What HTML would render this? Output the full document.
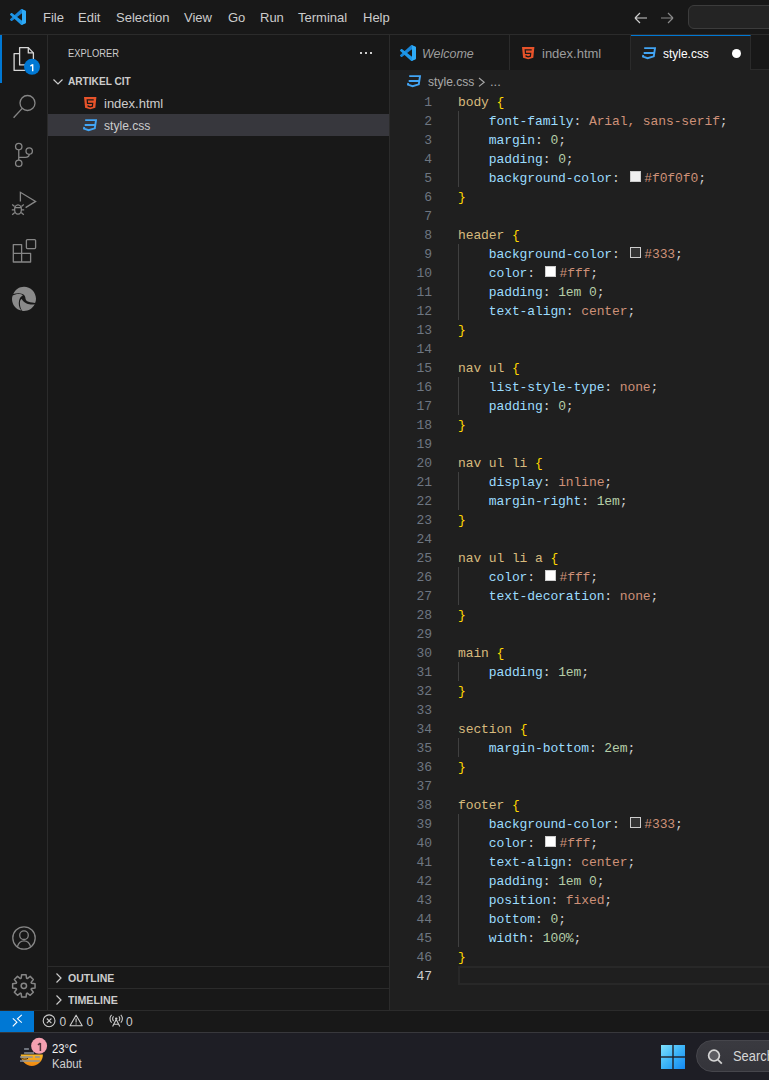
<!DOCTYPE html>
<html><head><meta charset="utf-8">
<style>
*{margin:0;padding:0;box-sizing:border-box}
html,body{width:769px;height:1080px;overflow:hidden;background:#181818;font-family:"Liberation Sans",sans-serif;color:#cccccc}
.abs{position:absolute}
#title{position:absolute;left:0;top:0;width:769px;height:35px;background:#181818;border-bottom:1px solid #2b2b2b}
.menu{position:absolute;top:10px;font-size:13px;color:#cccccc;line-height:15px}
#act{position:absolute;left:0;top:35px;width:48px;height:975px;background:#181818;border-right:1px solid #2b2b2b}
#side{position:absolute;left:48px;top:35px;width:342px;height:975px;background:#181818;border-right:1px solid #2b2b2b}
#tabs{position:absolute;left:390px;top:35px;width:379px;height:35px;background:#181818;border-bottom:1px solid #2b2b2b}
.tab{position:absolute;top:0;height:35px;border-right:1px solid #2b2b2b;background:#181818}
.tab .lbl{position:absolute;top:10px;font-size:13px;line-height:15px;color:#9d9d9d;white-space:nowrap}
#editor{position:absolute;left:390px;top:70px;width:379px;height:940px;background:#1f1f1f}
#status{position:absolute;left:0;top:1010px;width:769px;height:22px;background:#181818;border-top:1px solid #2b2b2b}
#task{position:absolute;left:0;top:1032px;width:769px;height:48px;background:#1e1e25;border-top:1px solid #38383c}
.code{position:absolute;left:68px;font-family:"Liberation Mono",monospace;font-size:13px;letter-spacing:-0.1px;white-space:pre;line-height:19px;height:19px;color:#cccccc}
.ln{position:absolute;left:0;width:42px;text-align:right;color:#6e7681;font-family:"Liberation Mono",monospace;font-size:13px;line-height:19px;letter-spacing:-0.1px}
.ln.act{color:#cccccc}
.ig{position:absolute;left:68px;width:1px;background:#404040}
.s{color:#d7ba7d}.b{color:#ffd700}.p{color:#9cdcfe}.v{color:#ce9178}.n{color:#b5cea8}.w{color:#cccccc}
.sw{display:inline-block;width:11px;height:11px;border:1px solid #cccccc;margin:0 3.4px 0 2.4px;vertical-align:0px}
.sh{position:absolute;left:0;width:341px;height:22px;border-top:1px solid #2b2b2b;font-size:11px;font-weight:bold;line-height:20px;color:#cccccc}
.row{position:absolute;left:0;width:341px;height:22px;font-size:13px;line-height:22px;color:#cccccc}
</style></head><body>
<div id="title">
  <svg class="abs" style="left:10px;top:9px" width="16" height="16" viewBox="0 0 100 100">
    <path fill="#1784d6" d="M96.46 10.8 75.86.87a6.230 6.230 0 0 0-7.1 1.2L1.33 63.260a4.170 4.170 0 0 0 0 6.160l5.51 5a4.170 4.170 0 0 0 5.320.24L93.48 13.1a4.140 4.140 0 0 1 6.520 3.310v-.2a6.270 6.270 0 0 0-3.540-5.410z"/>
    <path fill="#1e97e8" d="M96.46 89.2 75.86 99.13a6.230 6.230 0 0 1-7.1-1.2L1.33 36.740a4.170 4.170 0 0 1 0-6.160l5.51-5a4.170 4.170 0 0 1 5.320-.24l81.320 61.570a4.140 4.140 0 0 0 6.520-3.310v.2a6.270 6.270 0 0 1-3.540 5.4z"/>
    <path fill="#2eaaf6" d="M75.86 99.13a6.230 6.230 0 0 1-7.1-1.2c2.3 2.3 6.240.67 6.240-2.580V4.650c0-3.250-3.940-4.880-6.240-2.580a6.230 6.230 0 0 1 7.1-1.2l20.6 9.9A6.250 6.250 0 0 1 100 16.4v67.2a6.250 6.250 0 0 1-3.540 5.630z"/>
  </svg>
  <div class="menu" style="left:43px">File</div>
  <div class="menu" style="left:78px">Edit</div>
  <div class="menu" style="left:116px">Selection</div>
  <div class="menu" style="left:184px">View</div>
  <div class="menu" style="left:228px">Go</div>
  <div class="menu" style="left:260px">Run</div>
  <div class="menu" style="left:298px">Terminal</div>
  <div class="menu" style="left:363px">Help</div>
  <svg class="abs" style="left:633px;top:10px" width="16" height="16" viewBox="0 0 16 16"><path d="M2 8h12M2 8l5-5M2 8l5 5" stroke="#cccccc" stroke-width="1.2" fill="none"/></svg>
  <svg class="abs" style="left:659px;top:10px" width="16" height="16" viewBox="0 0 16 16"><path d="M2 8h12M14 8l-5-5M14 8l-5 5" stroke="#8a8a8a" stroke-width="1.2" fill="none"/></svg>
  <div class="abs" style="left:688px;top:5px;width:100px;height:24px;border:1px solid #3c3c3c;border-radius:6px;background:#242424"></div>
</div>

<div id="act">
<svg class="abs" style="left:0;top:-35px" width="48" height="1080" viewBox="0 0 48 1080">
  <rect x="0" y="35" width="2" height="48" fill="#0078d4"/>
  <g fill="none" stroke="#d7d7d7" stroke-width="1.3" stroke-linejoin="round">
    <path d="M19.5 53.6H14.1V70.4H25.5"/>
    <path d="M19.6 47.6H28.3L33.4 52.9V64.9H19.6Z"/>
    <path d="M28.3 47.6V52.9H33.4"/>
  </g>
  <circle cx="32" cy="66.8" r="8" fill="#0078d4"/>
  <path d="M32.7 64.2V71.2M32.7 64.5L30.4 66.1" stroke="#ffffff" stroke-width="1.4" fill="none"/>
  <g fill="none" stroke="#868686" stroke-width="1.3">
    <circle cx="27.5" cy="103" r="7.5"/>
    <path d="M22.2 108.4L13.6 117.8"/>
    <circle cx="18.75" cy="146.6" r="3.2"/>
    <circle cx="18.75" cy="163.3" r="3.2"/>
    <circle cx="29.2" cy="151.1" r="3.2"/>
    <path d="M18.75 149.8V160.1M18.75 157.4H25.4Q29.2 157.4 29.2 154.3"/>
    <path d="M20.4 201.6V192.3L35.6 201.4L25.6 207.6" stroke-linejoin="miter"/>
    <ellipse cx="18" cy="209.5" rx="3.4" ry="4.6"/>
    <path d="M14.6 207.6H21.4M12.2 204.6L14.6 206.4M23.8 204.6L21.4 206.4M11.8 209.8H14.6M24.2 209.8H21.4M12.2 214.8L14.8 212.6M23.8 214.8L21.2 212.6"/>
    <path d="M13.3 244.6H21.6V262H13.3ZM13.3 253.3H30.6V262H21.6" stroke-linejoin="round"/><rect x="26.4" y="239.6" width="9.2" height="9" rx="1"/>
    <circle cx="24" cy="938" r="11.2"/>
    <circle cx="24" cy="935.2" r="4.3"/>
    <path d="M17.4 946.6C18.6 942.6 21 940.8 24 940.8S29.4 942.6 30.6 946.6"/>
    <path stroke-linejoin="round" d="M21.14 978.24 L21.64 974.64 L26.04 974.64 L26.54 978.24 L27.30 978.56 L30.20 976.36 L33.32 979.48 L31.12 982.38 L31.44 983.14 L35.04 983.64 L35.04 988.04 L31.44 988.54 L31.12 989.30 L33.32 992.20 L30.20 995.32 L27.30 993.12 L26.54 993.44 L26.04 997.04 L21.64 997.04 L21.14 993.44 L20.38 993.12 L17.48 995.32 L14.36 992.20 L16.56 989.30 L16.24 988.54 L12.64 988.04 L12.64 983.64 L16.24 983.14 L16.56 982.38 L14.36 979.48 L17.48 976.36 L20.38 978.56Z" stroke-width="1.5"/>
    <circle cx="23.84" cy="985.84" r="2.7" stroke-width="1.5"/>
  </g>
  <g fill="#8a8a8a" transform="translate(10 284)">
    <path d="M3.3 10.1 C5.2 5.4 9.2 2.7 14 2.7 C20.6 2.7 26 8.1 26 14.8 C26 16.4 25.7 17.8 25.1 19 C23.6 18.3 20.6 18.4 18.6 17.7 C16.6 17 15.6 15.8 15.5 14.4 C15.4 12.4 14.4 10.6 12.6 9.9 C9.6 8.8 5.8 9.2 3.3 10.1 Z"/>
    <path d="M2.7 11.6 C4.2 10.6 6.4 10 8.6 10 C10.4 10 12 10.4 13 11.3 C11 12.3 9.7 14.1 9.1 16.4 C8.4 19.4 8.7 23.6 11.4 26.6 C6 25.6 2 20.8 2 15 C2 13.8 2.2 12.7 2.7 11.6 Z"/>
    <path d="M9.9 18.5 C10 16.8 10.6 15.6 11.7 15 C12.6 16.8 14.2 18.4 16.6 19.4 C19 20.4 22.4 20.8 24.7 20.2 C22.6 24.3 18.6 26.9 14 26.9 C13.3 26.9 12.7 26.8 12.1 26.7 C10.5 24.6 9.8 21.4 9.9 18.5 Z"/>
  </g>
</svg>
</div>

<div id="side">
  <div class="abs" style="left:20px;top:12px;font-size:11px;line-height:13px;color:#cccccc;transform:scaleX(0.85);transform-origin:0 0">EXPLORER</div>
  <div class="abs" style="left:312px;top:17px;width:2px;height:2px;background:#cccccc"></div>
  <div class="abs" style="left:317px;top:17px;width:2px;height:2px;background:#cccccc"></div>
  <div class="abs" style="left:322px;top:17px;width:2px;height:2px;background:#cccccc"></div>
  <svg class="abs" style="left:4px;top:39px" width="16" height="16" viewBox="0 0 16 16"><path d="M1.5 5.5L6 10L10.5 5.5" stroke="#cccccc" stroke-width="1.2" fill="none"/></svg>
  <div class="abs" style="left:20px;top:40px;font-size:11px;font-weight:bold;line-height:13px;color:#cccccc;transform:scaleX(0.92);transform-origin:0 0">ARTIKEL CIT</div>
  <div class="row" style="top:57px">
    <svg class="abs" style="left:35.8px;top:4.7px" width="13" height="13" viewBox="0 0 13 13"><path d="M0 0H12.4L11.3 10.8L6.2 12.2L1.1 10.8Z" fill="#e8532a"/><path d="M9.7 2.9H3.2L3.5 6.4H8.7L8.4 9.2L6.2 9.8L4.1 9.2L4 8.2" stroke="#181818" stroke-width="1.2" fill="none"/></svg>
    <span class="abs" style="left:56px;top:1px">index.html</span>
  </div>
  <div class="row" style="top:79px;background:#37373d">
    <svg class="abs" style="left:35px;top:4.7px" width="15" height="13" viewBox="0 0 15 13"><path d="M2.2 1.1H13L11.8 9.3L5.6 11.2L1 9.6L1.3 8M1.7 6H11.6" stroke="#42a5f5" stroke-width="1.9" fill="none" stroke-linejoin="miter"/></svg>
    <span class="abs" style="left:56px;top:1px;transform:scaleX(0.93);transform-origin:0 0">style.css</span>
  </div>
  <div class="sh" style="top:931px">
    <svg class="abs" style="left:3px;top:3px" width="16" height="16" viewBox="0 0 16 16"><path d="M5.5 3.5L10 8L5.5 12.5" stroke="#cccccc" stroke-width="1.2" fill="none"/></svg>
    <span class="abs" style="left:20px;top:1px;transform:scaleX(0.96);transform-origin:0 0">OUTLINE</span>
  </div>
  <div class="sh" style="top:953px">
    <svg class="abs" style="left:3px;top:3px" width="16" height="16" viewBox="0 0 16 16"><path d="M5.5 3.5L10 8L5.5 12.5" stroke="#cccccc" stroke-width="1.2" fill="none"/></svg>
    <span class="abs" style="left:20px;top:1px;transform:scaleX(0.97);transform-origin:0 0">TIMELINE</span>
  </div>
</div>

<div id="tabs">
  <div class="tab" style="left:0;width:120px">
    <svg class="abs" style="left:10px;top:10px" width="16" height="16" viewBox="0 0 100 100">
      <path fill="#1784d6" d="M96.46 10.8 75.86.87a6.230 6.230 0 0 0-7.1 1.2L1.33 63.260a4.170 4.170 0 0 0 0 6.160l5.51 5a4.170 4.170 0 0 0 5.320.24L93.48 13.1a4.140 4.140 0 0 1 6.520 3.310v-.2a6.270 6.270 0 0 0-3.540-5.410z"/>
    <path fill="#1e97e8" d="M96.46 89.2 75.86 99.13a6.230 6.230 0 0 1-7.1-1.2L1.33 36.740a4.170 4.170 0 0 1 0-6.160l5.51-5a4.170 4.170 0 0 1 5.320-.24l81.320 61.570a4.140 4.140 0 0 0 6.520-3.310v.2a6.270 6.270 0 0 1-3.540 5.4z"/>
    <path fill="#2eaaf6" d="M75.86 99.13a6.230 6.230 0 0 1-7.1-1.2c2.3 2.3 6.240.67 6.240-2.580V4.650c0-3.250-3.940-4.880-6.240-2.580a6.230 6.230 0 0 1 7.1-1.2l20.6 9.9A6.250 6.250 0 0 1 100 16.4v67.2a6.250 6.250 0 0 1-3.540 5.630z"/>
    </svg>
    <span class="lbl" style="left:32px;top:11px;font-style:italic;transform:scaleX(0.96);transform-origin:0 0">Welcome</span>
  </div>
  <div class="tab" style="left:120px;width:121px">
    <svg class="abs" style="left:11.8px;top:11.7px" width="13" height="13" viewBox="0 0 13 13"><path d="M0 0H12.4L11.3 10.8L6.2 12.2L1.1 10.8Z" fill="#e8532a"/><path d="M9.7 2.9H3.2L3.5 6.4H8.7L8.4 9.2L6.2 9.8L4.1 9.2L4 8.2" stroke="#181818" stroke-width="1.2" fill="none"/></svg>
    <span class="lbl" style="left:32px;top:11px">index.html</span>
  </div>
  <div class="tab" style="left:241px;width:120px;background:#1f1f1f;height:35px;border-top:1px solid #0078d4">
    <svg class="abs" style="left:11px;top:10.7px" width="15" height="13" viewBox="0 0 15 13"><path d="M2.2 1.1H13L11.8 9.3L5.6 11.2L1 9.6L1.3 8M1.7 6H11.6" stroke="#42a5f5" stroke-width="1.9" fill="none" stroke-linejoin="miter"/></svg>
    <span class="lbl" style="left:32px;top:10px;color:#ffffff;transform:scaleX(0.92);transform-origin:0 0">style.css</span>
    <div class="abs" style="left:100.5px;top:12.5px;width:9px;height:9px;border-radius:50%;background:#ffffff"></div>
  </div>
</div>

<div id="editor">
  <svg class="abs" style="left:17px;top:4.5px" width="15" height="13" viewBox="0 0 15 13"><path d="M2.2 1.1H13L11.8 9.3L5.6 11.2L1 9.6L1.3 8M1.7 6H11.6" stroke="#42a5f5" stroke-width="1.9" fill="none" stroke-linejoin="miter"/></svg>
  <span class="abs" style="left:38px;top:4px;font-size:13px;line-height:15px;color:#a9a9a9;transform:scaleX(0.93);transform-origin:0 0">style.css</span>
  <svg class="abs" style="left:86px;top:6px" width="10" height="12" viewBox="0 0 10 12"><path d="M3 2L8.2 6.2L3 10.4" stroke="#a9a9a9" stroke-width="1.1" fill="none"/></svg>
  <span class="abs" style="left:100px;top:4px;font-size:13px;line-height:15px;color:#a9a9a9">...</span>
  <div class="abs" style="left:68px;top:896px;width:320px;height:19px;border:2px solid #282828"></div>
<div class="ig" style="top:41px;height:76px"></div>
<div class="ig" style="top:174px;height:76px"></div>
<div class="ig" style="top:307px;height:38px"></div>
<div class="ig" style="top:402px;height:38px"></div>
<div class="ig" style="top:497px;height:38px"></div>
<div class="ig" style="top:592px;height:19px"></div>
<div class="ig" style="top:668px;height:19px"></div>
<div class="ig" style="top:744px;height:133px"></div><div class="ln" style="top:23px">1</div><div class="code" style="top:23px"><span class="s">body</span> <span class="b">{</span></div>
<div class="ln" style="top:42px">2</div><div class="code" style="top:42px">    <span class="p">font-family</span><span class="w">: </span><span class="v">Arial, sans-serif</span><span class="w">;</span></div>
<div class="ln" style="top:61px">3</div><div class="code" style="top:61px">    <span class="p">margin</span><span class="w">: </span><span class="n">0</span><span class="w">;</span></div>
<div class="ln" style="top:80px">4</div><div class="code" style="top:80px">    <span class="p">padding</span><span class="w">: </span><span class="n">0</span><span class="w">;</span></div>
<div class="ln" style="top:99px">5</div><div class="code" style="top:99px">    <span class="p">background-color</span><span class="w">: </span><span class="sw" style="background:#f0f0f0"></span><span class="v">#f0f0f0</span><span class="w">;</span></div>
<div class="ln" style="top:118px">6</div><div class="code" style="top:118px"><span class="b">}</span></div>
<div class="ln" style="top:137px">7</div><div class="code" style="top:137px"></div>
<div class="ln" style="top:156px">8</div><div class="code" style="top:156px"><span class="s">header</span> <span class="b">{</span></div>
<div class="ln" style="top:175px">9</div><div class="code" style="top:175px">    <span class="p">background-color</span><span class="w">: </span><span class="sw" style="background:#333"></span><span class="v">#333</span><span class="w">;</span></div>
<div class="ln" style="top:194px">10</div><div class="code" style="top:194px">    <span class="p">color</span><span class="w">: </span><span class="sw" style="background:#fff"></span><span class="v">#fff</span><span class="w">;</span></div>
<div class="ln" style="top:213px">11</div><div class="code" style="top:213px">    <span class="p">padding</span><span class="w">: </span><span class="n">1em</span> <span class="n">0</span><span class="w">;</span></div>
<div class="ln" style="top:232px">12</div><div class="code" style="top:232px">    <span class="p">text-align</span><span class="w">: </span><span class="v">center</span><span class="w">;</span></div>
<div class="ln" style="top:251px">13</div><div class="code" style="top:251px"><span class="b">}</span></div>
<div class="ln" style="top:270px">14</div><div class="code" style="top:270px"></div>
<div class="ln" style="top:289px">15</div><div class="code" style="top:289px"><span class="s">nav</span> <span class="s">ul</span> <span class="b">{</span></div>
<div class="ln" style="top:308px">16</div><div class="code" style="top:308px">    <span class="p">list-style-type</span><span class="w">: </span><span class="v">none</span><span class="w">;</span></div>
<div class="ln" style="top:327px">17</div><div class="code" style="top:327px">    <span class="p">padding</span><span class="w">: </span><span class="n">0</span><span class="w">;</span></div>
<div class="ln" style="top:346px">18</div><div class="code" style="top:346px"><span class="b">}</span></div>
<div class="ln" style="top:365px">19</div><div class="code" style="top:365px"></div>
<div class="ln" style="top:384px">20</div><div class="code" style="top:384px"><span class="s">nav</span> <span class="s">ul</span> <span class="s">li</span> <span class="b">{</span></div>
<div class="ln" style="top:403px">21</div><div class="code" style="top:403px">    <span class="p">display</span><span class="w">: </span><span class="v">inline</span><span class="w">;</span></div>
<div class="ln" style="top:422px">22</div><div class="code" style="top:422px">    <span class="p">margin-right</span><span class="w">: </span><span class="n">1em</span><span class="w">;</span></div>
<div class="ln" style="top:441px">23</div><div class="code" style="top:441px"><span class="b">}</span></div>
<div class="ln" style="top:460px">24</div><div class="code" style="top:460px"></div>
<div class="ln" style="top:479px">25</div><div class="code" style="top:479px"><span class="s">nav</span> <span class="s">ul</span> <span class="s">li</span> <span class="s">a</span> <span class="b">{</span></div>
<div class="ln" style="top:498px">26</div><div class="code" style="top:498px">    <span class="p">color</span><span class="w">: </span><span class="sw" style="background:#fff"></span><span class="v">#fff</span><span class="w">;</span></div>
<div class="ln" style="top:517px">27</div><div class="code" style="top:517px">    <span class="p">text-decoration</span><span class="w">: </span><span class="v">none</span><span class="w">;</span></div>
<div class="ln" style="top:536px">28</div><div class="code" style="top:536px"><span class="b">}</span></div>
<div class="ln" style="top:555px">29</div><div class="code" style="top:555px"></div>
<div class="ln" style="top:574px">30</div><div class="code" style="top:574px"><span class="s">main</span> <span class="b">{</span></div>
<div class="ln" style="top:593px">31</div><div class="code" style="top:593px">    <span class="p">padding</span><span class="w">: </span><span class="n">1em</span><span class="w">;</span></div>
<div class="ln" style="top:612px">32</div><div class="code" style="top:612px"><span class="b">}</span></div>
<div class="ln" style="top:631px">33</div><div class="code" style="top:631px"></div>
<div class="ln" style="top:650px">34</div><div class="code" style="top:650px"><span class="s">section</span> <span class="b">{</span></div>
<div class="ln" style="top:669px">35</div><div class="code" style="top:669px">    <span class="p">margin-bottom</span><span class="w">: </span><span class="n">2em</span><span class="w">;</span></div>
<div class="ln" style="top:688px">36</div><div class="code" style="top:688px"><span class="b">}</span></div>
<div class="ln" style="top:707px">37</div><div class="code" style="top:707px"></div>
<div class="ln" style="top:726px">38</div><div class="code" style="top:726px"><span class="s">footer</span> <span class="b">{</span></div>
<div class="ln" style="top:745px">39</div><div class="code" style="top:745px">    <span class="p">background-color</span><span class="w">: </span><span class="sw" style="background:#333"></span><span class="v">#333</span><span class="w">;</span></div>
<div class="ln" style="top:764px">40</div><div class="code" style="top:764px">    <span class="p">color</span><span class="w">: </span><span class="sw" style="background:#fff"></span><span class="v">#fff</span><span class="w">;</span></div>
<div class="ln" style="top:783px">41</div><div class="code" style="top:783px">    <span class="p">text-align</span><span class="w">: </span><span class="v">center</span><span class="w">;</span></div>
<div class="ln" style="top:802px">42</div><div class="code" style="top:802px">    <span class="p">padding</span><span class="w">: </span><span class="n">1em</span> <span class="n">0</span><span class="w">;</span></div>
<div class="ln" style="top:821px">43</div><div class="code" style="top:821px">    <span class="p">position</span><span class="w">: </span><span class="v">fixed</span><span class="w">;</span></div>
<div class="ln" style="top:840px">44</div><div class="code" style="top:840px">    <span class="p">bottom</span><span class="w">: </span><span class="n">0</span><span class="w">;</span></div>
<div class="ln" style="top:859px">45</div><div class="code" style="top:859px">    <span class="p">width</span><span class="w">: </span><span class="n">100%</span><span class="w">;</span></div>
<div class="ln" style="top:878px">46</div><div class="code" style="top:878px"><span class="b">}</span></div>
<div class="ln act" style="top:897px">47</div><div class="code" style="top:897px"></div></div>

<div id="status">
  <div class="abs" style="left:0;top:0;width:34px;height:21px;background:#0078d4"></div>
  <svg class="abs" style="left:0;top:-1011px" width="140" height="1032" viewBox="0 0 140 1032">
    <path d="M12.8 1018.4L16.9 1022.2L12.8 1026.4M21.8 1014.8L17.5 1018.8L21.8 1022.6" stroke="#ffffff" stroke-width="1.1" fill="none"/>
    <circle cx="49.1" cy="1020.8" r="5.9" stroke="#cccccc" stroke-width="1.1" fill="none"/>
    <path d="M46.8 1018.5L51.4 1023.1M51.4 1018.5L46.8 1023.1" stroke="#cccccc" stroke-width="1.1"/>
    <path d="M76.1 1015.2L82.2 1025.8H70Z" stroke="#cccccc" stroke-width="1.1" fill="none" stroke-linejoin="round"/>
    <path d="M76.1 1018.6V1022.4M76.1 1023.4V1024.6" stroke="#cccccc" stroke-width="1.1"/>
    <path d="M116.2 1019.4L112.6 1026.6M116.2 1019.4L119.8 1026.6M113.8 1024.2H118.6" stroke="#cccccc" stroke-width="1.1" fill="none"/>
    <circle cx="116.2" cy="1018.6" r="1.2" fill="#cccccc"/>
    <path d="M113.6 1016.4A3.2 3.2 0 0 0 113.6 1021M118.8 1016.4A3.2 3.2 0 0 1 118.8 1021M111.6 1014.8A5.6 5.6 0 0 0 111.6 1022.6M120.8 1014.8A5.6 5.6 0 0 1 120.8 1022.6" stroke="#cccccc" stroke-width="1.1" fill="none"/>
  </svg>
  <span class="abs" style="left:59.5px;top:4px;font-size:12px;line-height:15px;color:#cccccc">0</span>
  <span class="abs" style="left:86.5px;top:4px;font-size:12px;line-height:15px;color:#cccccc">0</span>
  <span class="abs" style="left:126px;top:4px;font-size:12px;line-height:15px;color:#cccccc">0</span>
</div>

<div id="task">
  <svg class="abs" style="left:0;top:-1033px" width="60" height="1080" viewBox="0 0 60 1080">
    <defs><linearGradient id="og" x1="0" y1="0" x2="0" y2="1"><stop offset="0" stop-color="#f7b928"/><stop offset="1" stop-color="#f0850e"/></linearGradient></defs>
    <path d="M20.8 1054.4H42.9A11.05 11.6 0 0 1 20.8 1054.4Z" fill="url(#og)"/>
    <path d="M21.5 1058.2C23 1059.4 26 1059.4 28 1058.4" stroke="#1e1e25" stroke-width="0.9" fill="none"/>
    <path d="M24.1 1049H28.9M24.1 1053H34.1M20 1057H32.7M35 1057H39.8M20 1061H39.8" stroke="#8b919a" stroke-width="1.5"/>
    <circle cx="39.1" cy="1045.8" r="8" fill="#f5a0b1"/>
    <path d="M40.4 1042.9V1051M40.4 1043.2L37.9 1044.9" stroke="#4f333b" stroke-width="1.5" fill="none"/>
  </svg>
  <span class="abs" style="left:52px;top:8.6px;font-size:12px;line-height:14px;color:#f2f2f2;transform:scaleX(0.94);transform-origin:0 0">23°C</span>
  <span class="abs" style="left:52px;top:24px;font-size:12px;line-height:14px;color:#cfcfcf;transform:scaleX(0.95);transform-origin:0 0">Kabut</span>
  <svg class="abs" style="left:661px;top:12px" width="24" height="24" viewBox="0 0 24 24">
    <defs><linearGradient id="wg" gradientUnits="userSpaceOnUse" x1="0" y1="0" x2="24" y2="24"><stop offset="0" stop-color="#7fe0fc"/><stop offset="0.5" stop-color="#3cb4f8"/><stop offset="1" stop-color="#1388f2"/></linearGradient></defs>
    <rect x="0" y="0" width="11.3" height="11.3" fill="url(#wg)"/><rect x="12.7" y="0" width="11.3" height="11.3" fill="url(#wg)"/><rect x="0" y="12.7" width="11.3" height="11.3" fill="url(#wg)"/><rect x="12.7" y="12.7" width="11.3" height="11.3" fill="url(#wg)"/>
  </svg>
  <div class="abs" style="left:696px;top:7px;width:120px;height:32px;border-radius:16px;background:linear-gradient(#3a3a40,#34343a);border:1px solid #46464c"></div>
  <svg class="abs" style="left:706px;top:15px" width="18" height="18" viewBox="0 0 18 18"><circle cx="8" cy="7.6" r="5.4" stroke="#d6d6d6" stroke-width="1.7" fill="#5c5c62"/><path d="M11.8 11.6L15.8 15.6" stroke="#d0d0d0" stroke-width="1.8"/></svg>
  <span class="abs" style="left:733px;top:15px;font-size:14px;line-height:16px;color:#d6d6d6;transform:scaleX(0.92);transform-origin:0 0">Search</span>
</div>

</body></html>
